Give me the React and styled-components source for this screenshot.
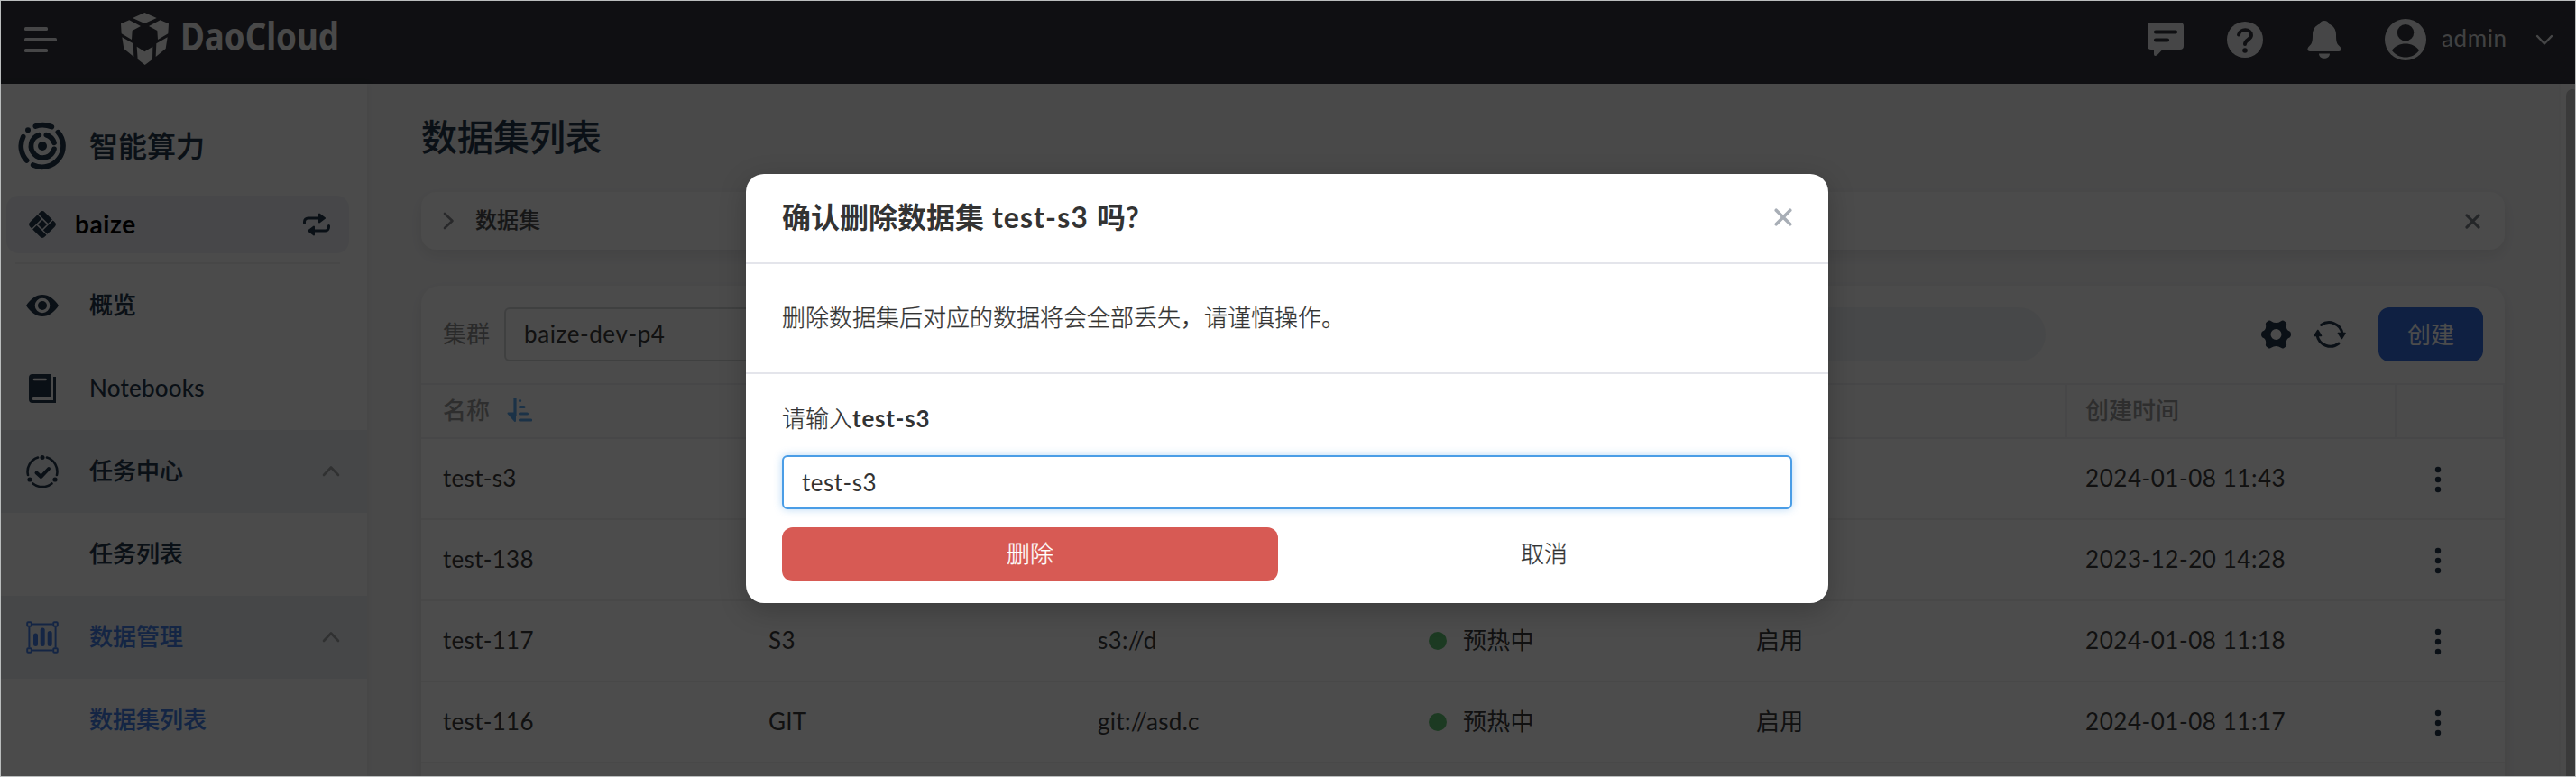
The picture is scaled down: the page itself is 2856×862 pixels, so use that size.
import React from "react";
import styled, { createGlobalStyle, css } from "styled-components";

const ink = "#24364a";
const text = "#3a3a3a";
const blue = "#437ee4";
const line = "#eeeff1";

const GlobalStyle = createGlobalStyle`
  *, *::before, *::after { box-sizing: border-box; }
  body { margin: 0; font-family: Lato, "Noto Sans CJK SC", sans-serif; font-size: 26px; color: ${text}; }
  button, input { font: inherit; color: inherit; margin: 0; }
`;

const medium = css`
  -webkit-text-stroke: 0.2px currentColor;
`;
const light = css`
  font-weight: 300;
  -webkit-text-stroke: 0.25px currentColor;
`;

const Frame = styled.div`
  position: relative;
  display: flex;
  flex-direction: column;
  width: 2856px;
  height: 862px;
  border: 1px solid #babdbd;
  overflow: hidden;
  background: #f5f6f7;
`;

const Header = styled.header`
  display: flex;
  align-items: center;
  flex: none;
  height: 92px;
  padding: 0 24px 7px 26px;
  background: #32353c;
  color: #ebecee;
`;
const Brand = styled.div`
  display: flex;
  align-items: center;
  gap: 12px;
  margin-left: 70px;
  padding-bottom: 1px;
`;
const WordmarkSvg = styled.svg`
  margin: 0 0 4px 2px;
  overflow: visible;
`;
const HeaderTools = styled.div`
  display: flex;
  align-items: center;
  margin-left: auto;
`;
const HeaderIcon = styled.span`
  display: flex;
  justify-content: center;
  width: 40px;
  margin-right: 48px;
`;
const User = styled.div`
  display: flex;
  align-items: center;
  margin-left: -1px;
  line-height: 40px;
  letter-spacing: 0.6px;
`;
const UserName = styled.span`
  width: 104px;
  margin-left: 17px;
  padding-bottom: 3px;
  color: #d9dbde;
`;

const Body = styled.div`
  display: flex;
  flex: 1;
  min-height: 0;
`;

const Sidebar = styled.aside`
  position: relative;
  flex: none;
  width: 406px;
  background: #fafafa;
  box-shadow: 2px 0 8px rgba(0, 0, 0, 0.05);
  color: ${ink};
`;
const SidebarTitle = styled.div`
  ${medium}
  display: flex;
  align-items: center;
  gap: 25px;
  height: 124px;
  padding: 14px 0 0 19px;
  font-size: 32px;
  font-weight: 500;
  line-height: 40px;
`;
const Workspace = styled.div`
  display: flex;
  align-items: center;
  height: 64px;
  margin: 0 20px 10px 6px;
  padding: 0 20px 0 24px;
  border-radius: 14px;
  background: #edeff3;
`;
const WorkspaceName = styled.span`
  flex: 1;
  margin-left: 20px;
  padding-bottom: 2px;
  font-size: 28px;
  font-weight: 700;
  line-height: 40px;
  letter-spacing: 0.6px;
  color: #000;
`;
const Divider = styled.hr`
  height: 2px;
  margin: 0 30px 0 16px;
  border: 0;
  background: #efefef;
`;
const NavItem = styled.a`
  display: flex;
  align-items: center;
  height: 92px;
  padding: 0 30px 0 28px;
  font-weight: 500;
  line-height: 40px;
  letter-spacing: ${(p) => (p.$latin ? "0.2px" : "0")};
  color: ${(p) => (p.$active ? blue : ink)};
  background: ${(p) => (p.$open ? "#ebeef2" : "transparent")};
`;
const NavIcon = styled.span`
  display: flex;
  width: 36px;
  height: 36px;
  margin-right: 34px;
`;
const NavLabel = styled.span`
  ${(p) => !p.$latin && medium}
  flex: 1;
  padding-bottom: 3px;
`;

const Main = styled.main`
  flex: 1;
  min-width: 0;
  padding: 0 60px 0 60px;
  background: #f5f5f6;
`;
const PageTitle = styled.h1`
  ${medium}
  height: 120px;
  margin: 0;
  padding-top: 29px;
  font-size: 40px;
  font-weight: 500;
  line-height: 60px;
  color: ${ink};
`;
const card = css`
  background: #fafafa;
  box-shadow: 0 6px 18px rgba(0, 0, 0, 0.09);
`;
const TipCard = styled.section`
  ${card}
  display: flex;
  align-items: center;
  height: 64px;
  margin-bottom: 40px;
  padding: 0 27px 0 20px;
  border-radius: 16px;
`;
const TipTitle = styled.span`
  ${medium}
  flex: 1;
  margin-left: 20px;
  padding-bottom: 3px;
  font-size: 24px;
  font-weight: 500;
  line-height: 36px;
  color: #4c4c4c;
`;
const TableCard = styled.section`
  ${card}
  height: 640px;
  border-radius: 20px 20px 0 0;
`;
const Toolbar = styled.div`
  display: flex;
  align-items: center;
  height: 108px;
  padding: 0 24px;
  color: ${ink};
`;
const FilterLabel = styled.span`
  width: 68px;
  padding-bottom: 2px;
  line-height: 40px;
  color: #8c8c8c;
`;
const Select = styled.div`
  width: 290px;
  height: 60px;
  padding-left: 20px;
  border: 2px solid #d4d5d8;
  border-radius: 6px;
  line-height: 55px;
  letter-spacing: 0.6px;
  color: ${text};
`;
const Search = styled.div`
  flex: 1;
  height: 60px;
  margin: 0 239px 0 40px;
  border-radius: 30px;
  background: #eff1f4;
`;
const CreateButton = styled.button`
  width: 116px;
  height: 60px;
  margin-left: 36px;
  padding: 0 0 4px;
  border: 0;
  border-radius: 12px;
  background: #336bdc;
  color: #fff;
`;
const RefreshSlot = styled.span`
  display: flex;
  margin-left: 25px;
`;

const columns = "363px 365px 366px 364px 367px 365px 120px";
const TableHead = styled.div`
  display: grid;
  grid-template-columns: ${columns};
  height: 62px;
  border-top: 2px solid ${line};
  border-bottom: 2px solid ${line};
  font-weight: 500;
  color: #9c9c9c;
`;
const HeadCell = styled.div`
  display: flex;
  align-items: center;
  gap: 19px;
  padding: 0 0 5px 20px;
  border-right: 2px solid ${line};
  &:first-child { padding-left: 24px; }
  svg { position: relative; top: 1px; }
`;
const Row = styled.div`
  display: grid;
  grid-template-columns: ${columns};
  align-items: center;
  height: 90px;
  border-bottom: 2px solid #f0f0f0;
  background: #fefefe;
`;
const Cell = styled.div`
  display: flex;
  align-items: center;
  padding-left: ${(p) => (p.$menu ? "42px" : p.$date ? "20px" : "22px")};
  padding-top: ${(p) => (p.$menu ? "2px" : "0")};
  padding-bottom: ${(p) => (p.$menu ? "0" : "3px")};
  line-height: 40px;
  letter-spacing: ${(p) => (p.$date ? "0.55px" : "0.3px")};
  &:first-child { padding-left: 24px; }
`;
const StatusDot = styled.i`
  width: 20px;
  height: 20px;
  margin: 2px 18px 0 1px;
  border-radius: 50%;
  background: #60c472;
`;

const ScrollTrack = styled.div`
  flex: none;
  width: 18px;
  padding: 6px 0 0 6px;
  border-left: 2px solid #f0f0f0;
  background: #f9f9f9;
`;
const ScrollThumb = styled.div`
  width: 14px;
  height: 100%;
  border-radius: 8px 8px 0 0;
  background: #c1c1c1;
`;

const Overlay = styled.div`
  position: absolute;
  inset: 0;
  display: flex;
  align-items: center;
  justify-content: center;
  padding-right: 2px;
  background: rgba(0, 0, 0, 0.7);
`;
const Dialog = styled.div`
  width: 1200px;
  height: 476px;
  border-radius: 20px;
  background: #fff;
  box-shadow: 0 8px 30px rgba(0, 0, 0, 0.22);
  color: #333;
`;
const DialogHead = styled.div`
  display: flex;
  align-items: center;
  justify-content: space-between;
  height: 100px;
  padding: 0 40px 2px 40px;
  border-bottom: 2px solid #e4e5eb;
`;
const DialogTitle = styled.h2`
  margin: 0;
  font-size: 32px;
  font-weight: 700;
  line-height: 48px;
`;
const TitleName = styled.span`
  letter-spacing: 1.1px;
`;
const DialogNote = styled.p`
  ${light}
  height: 122px;
  margin: 0;
  padding: 40px 40px 0;
  border-bottom: 2px solid #e4e5eb;
  line-height: 38px;
`;
const DialogForm = styled.div`
  display: flex;
  flex-direction: column;
  padding: 28px 40px 24px;
`;
const Prompt = styled.label`
  ${light}
  height: 62px;
  line-height: 42px;
`;
const PromptName = styled.b`
  font-weight: 700;
  letter-spacing: 0.8px;
  -webkit-text-stroke: 0;
`;
const Input = styled.input`
  height: 60px;
  margin-bottom: 20px;
  padding: 0 20px;
  border: 2px solid #4a9de6;
  border-radius: 6px;
  outline: none;
  background: #fff;
  letter-spacing: 0.5px;
  box-shadow: 0 0 10px rgba(74, 157, 230, 0.4);
`;
const Actions = styled.div`
  display: grid;
  grid-template-columns: 1fr 1fr;
  gap: 20px;
`;
const ActionButton = styled.button`
  ${light}
  height: 60px;
  padding: 0 0 5px;
  border: 0;
  border-radius: 12px;
  background: ${(p) => (p.$danger ? "#d75a54" : "transparent")};
  color: ${(p) => (p.$danger ? "#fff" : "#333")};
`;

const MenuIcon = () => (
  <svg width="36" height="28" viewBox="0 0 36 28" fill="currentColor">
    <rect width="26" height="4" rx="1.5" />
    <rect y="12" width="36" height="4" rx="1.5" />
    <rect y="24" width="26" height="4" rx="1.5" />
  </svg>
);
const Logo = () => (
  <svg width="55" height="60" viewBox="399 37 165 180" fill="#f4f4f4">
    <path d="M481 40l40 18-40 18-40-18zM402 77l28-12 38 20-28 15-2 30-34-20zM561 77l-28-12-38 20 28 15 2 30 34-20zM406 122l37 21 2 44-33-27zM557 122l-37 21-2 44 33-27zM455 153l26 17 27-17-1 42-25 19-24-19z" />
  </svg>
);
const Wordmark = () => (
  <WordmarkSvg width="176" height="44" viewBox="0 0 176 44">
    <text x="-2" y="37" textLength="176" lengthAdjust="spacingAndGlyphs" fontFamily='"Noto Sans", sans-serif' fontWeight="700" fontSize="43" fill="#f4f4f4">DaoCloud</text>
  </WordmarkSvg>
);
const MessageIcon = () => (
  <svg width="40" height="38" viewBox="0 0 40 38">
    <path d="M4 0h32a4 4 0 0 1 4 4v22a4 4 0 0 1-4 4H16.500l-6 6.200Q7 38 7 35V30H4a4 4 0 0 1-4-4V4a4 4 0 0 1 4-4z" fill="currentColor" />
    <path d="M9 10.500h22M9 19.500h13" stroke="#32353c" strokeWidth="4.200" strokeLinecap="round" />
  </svg>
);
const HelpIcon = () => (
  <svg width="40" height="40" viewBox="0 0 40 40" fill="none">
    <circle cx="20" cy="20" r="20" fill="currentColor" />
    <path d="M13 14.500c1-7 14-7 14 .5 0 5-7 5-7 10" stroke="#32353c" strokeWidth="4" strokeLinecap="round" />
    <circle cx="20" cy="32" r="2.800" fill="#32353c" />
  </svg>
);
const BellIcon = () => (
  <svg width="38" height="42" viewBox="0 0 38 42" fill="currentColor">
    <path d="M19 0c3 0 4.500 1.500 5 3.500 5 2 8 6 8 12 0 7 .5 10 4 13 2.500 2.500 2 5.500-1 5.500H3c-3 0-3.500-3-1-5.500 3.500-3 4-6 4-13 0-6 3-10 8-12C14.500 1.500 16 0 19 0zM13 36.500h12c0 7-12 7-12 0z" />
  </svg>
);
const UserIcon = () => (
  <svg width="46" height="46" viewBox="0 0 46 46">
    <circle cx="23" cy="23" r="23" fill="currentColor" />
    <circle cx="23" cy="15.300" r="9.200" fill="#32353c" />
    <path d="M8 35c6-10 24-10 30 0-7 10-23 10-30 0z" fill="#32353c" />
  </svg>
);
const Chevron = ({ dir = "up", color = "#a0a3a6", width = 2.6 }) => {
  const d = { up: "M2 14l8-8.500 8 8.500", down: "M2 6l8 8.500L18 6", right: "M6 2l8.500 8L6 18" }[dir];
  return (
    <svg width="20" height="20" viewBox="0 0 20 20" fill="none" stroke={color} strokeWidth={width} strokeLinecap="round" strokeLinejoin="round">
      <path d={d} />
    </svg>
  );
};
const CloseIcon = ({ size = 18, color }) => (
  <svg width={size} height={size} viewBox="0 0 18 18" stroke={color} strokeWidth="3.200" strokeLinecap="round">
    <path d="M2 2l14 14M16 2L2 16" />
  </svg>
);
const ComputeIcon = () => (
  <svg width="54" height="54" viewBox="60 406 162 162" fill="none" stroke={ink} strokeWidth="17" strokeLinecap="round">
    <path d="M118 421Q144 412 172 423M193 441A70 70 0 0 1 110 550M77 456A70 70 0 0 0 89 535" />
    <path d="M154 450A39 39 0 0 1 180 476M130 450A39 39 0 1 0 180 497" />
    <circle cx="141" cy="487" r="15" fill={ink} stroke="none" />
    <circle cx="93" cy="434" r="9" fill={ink} stroke="none" />
  </svg>
);
const WorkspaceIcon = () => (
  <svg width="32" height="32" viewBox="-50 -50 100 100" fill={ink}>
    <g transform="rotate(-45)">
      <path d="M-36-24a12 12 0 0 1 12-12H12v20H-36zM16-36h8a12 12 0 0 1 12 12V12H16zM-12 16H36v8a12 12 0 0 1-12 12H-12zM-36-12h20V36h-8a12 12 0 0 1-12-12z" />
      <rect x="-11" y="-11" width="22" height="22" />
    </g>
  </svg>
);
const SwitchIcon = () => (
  <svg width="32" height="28" viewBox="0 0 32 28" fill="none" stroke={ink} strokeWidth="3" strokeLinecap="round">
    <path d="M2.500 12.500V11a4 4 0 0 1 4-4H20M29.500 15.500V17a4 4 0 0 1-4 4H12" />
    <path d="M19 2.500v9l6-4.500zM13 16.500v9L7 21z" fill={ink} strokeWidth="2" strokeLinejoin="round" />
  </svg>
);
const EyeIcon = () => (
  <svg width="36" height="36" viewBox="0 0 36 36" fill={ink} fillRule="evenodd">
    <path d="M0 18C5 10.500 11 6 18 6s13 4.500 18 12c-5 7.500-11 12-18 12S5 25.500 0 18zM18 9.700a8.300 8.300 0 1 0 0 16.600 8.300 8.300 0 0 0 0-16.600z" />
    <circle cx="18" cy="18" r="5" />
  </svg>
);
const BookIcon = () => (
  <svg width="36" height="36" viewBox="0 0 36 36">
    <path d="M7 2h20v25H8c-2 0-2 4 0 4h22V5h3v29H7a4 4 0 0 1-4-4V6a4 4 0 0 1 4-4z" fill={ink} />
    <path d="M9 8h12.500" stroke="#fafafa" strokeWidth="2.600" strokeLinecap="round" />
  </svg>
);
const TaskIcon = () => (
  <svg width="36" height="36" viewBox="0 0 36 36" fill="none" stroke={ink} strokeWidth="2.600" strokeLinecap="round">
    <path d="M13 2.500A16.500 16.500 0 0 0 2 22M23 2.500A16.500 16.500 0 0 1 34 22M7.500 31.500A17 17 0 0 0 28.500 31.500" />
    <path d="M11.500 19.500l5 4.500 8.500-9" strokeWidth="4" strokeLinejoin="round" />
    <g fill={ink} stroke="none">
      <circle cx="18" cy="2.500" r="2.500" />
      <circle cx="4" cy="27" r="2.600" />
      <circle cx="32" cy="27" r="2.600" />
    </g>
  </svg>
);
const DataIcon = () => (
  <svg width="36" height="36" viewBox="0 0 36 36" fill="none" stroke={blue} strokeWidth="2">
    <path d="M6.500 3.400h23M6.500 32.600h23M3.400 6.500v23M32.600 6.500v23" />
    <rect x="1.200" y="1.200" width="4.600" height="4.600" rx="1" />
    <rect x="30.200" y="1.200" width="4.600" height="4.600" rx="1" />
    <rect x="1.200" y="30.200" width="4.600" height="4.600" rx="1" />
    <rect x="30.200" y="30.200" width="4.600" height="4.600" rx="1" />
    <path d="M10.500 16v9.500M18.200 10v15.500M26.200 13.500v12" strokeWidth="5" strokeLinecap="round" />
  </svg>
);
const SortIcon = () => (
  <svg width="28" height="28" viewBox="0 0 28 28" fill="none" stroke="#5aa8ee" strokeWidth="3.200" strokeLinecap="round">
    <path d="M9 1.500v18" />
    <path d="M1.500 17.500h7.500v8.500z" fill="#5aa8ee" strokeWidth="2" strokeLinejoin="round" />
    <path d="M14.500 3.500h.1M14.500 10.500h4.500M14.500 18h8M14.500 25h12" />
  </svg>
);
const GearIcon = () => (
  <svg width="33" height="32" viewBox="0 0 33 32" fill={ink} fillRule="evenodd">
    <path d="M8 .8Q9.500-.2 11 1.200Q16.500 5 22 1.200Q23.500-.2 25 .8L27 2.200Q28.500 3.300 28 5Q27 11 31.500 12.500Q33 13 33 16Q33 19 31.500 19.500Q27 21 28 27Q28.500 28.700 27 29.800L25 31.200Q23.500 32.200 22 30.800Q16.500 27 11 30.800Q9.500 32.200 8 31.200L6 29.800Q4.500 28.700 5 27Q6 21 1.500 19.500Q0 19 0 16Q0 13 1.500 12.500Q6 11 5 5Q4.500 3.300 6 2.200zM16.500 10a6 6 0 1 0 0 12 6 6 0 0 0 0-12z" />
  </svg>
);
const RefreshIcon = () => (
  <svg width="36" height="36" viewBox="0 0 36 36" fill="none" stroke={ink} strokeWidth="3" strokeLinecap="round">
    <path d="M8.500 7.500A15 15 0 0 1 32 17M28 28A15 15 0 0 1 4 19" />
    <path d="M27.500 16.500h7.500l-3.700 6zM1 19.500h7.500l-3.700-6z" fill={ink} strokeWidth="1.600" strokeLinejoin="round" />
  </svg>
);
const KebabIcon = () => (
  <svg width="8" height="30" viewBox="0 0 8 30" fill={ink}>
    <circle cx="4" cy="4" r="3.200" />
    <circle cx="4" cy="15" r="3.200" />
    <circle cx="4" cy="26" r="3.200" />
  </svg>
);

const nav = [
  { label: "概览", icon: <EyeIcon /> },
  { label: "Notebooks", icon: <BookIcon />, latin: true },
  { label: "任务中心", icon: <TaskIcon />, open: true },
  { label: "任务列表" },
  { label: "数据管理", icon: <DataIcon />, open: true, active: true },
  { label: "数据集列表", active: true },
];

const rows = [
  { name: "test-s3", created: "2024-01-08 11:43" },
  { name: "test-138", created: "2023-12-20 14:28" },
  { name: "test-117", type: "S3", uri: "s3://d", status: "预热中", sharing: "启用", created: "2024-01-08 11:18" },
  { name: "test-116", type: "GIT", uri: "git://asd.c", status: "预热中", sharing: "启用", created: "2024-01-08 11:17" },
];

export default function App() {
  return (
    <>
      <GlobalStyle />
      <Frame>
        <Header>
          <MenuIcon />
          <Brand>
            <Logo />
            <Wordmark />
          </Brand>
          <HeaderTools>
            <HeaderIcon><MessageIcon /></HeaderIcon>
            <HeaderIcon><HelpIcon /></HeaderIcon>
            <HeaderIcon><BellIcon /></HeaderIcon>
            <User>
              <UserIcon />
              <UserName>admin</UserName>
              <Chevron dir="down" color="#ebecee" width={2.4} />
            </User>
          </HeaderTools>
        </Header>
        <Body>
          <Sidebar>
            <SidebarTitle>
              <ComputeIcon />
              智能算力
            </SidebarTitle>
            <Workspace>
              <WorkspaceIcon />
              <WorkspaceName>baize</WorkspaceName>
              <SwitchIcon />
            </Workspace>
            <Divider />
            {nav.map((item) => (
              <NavItem key={item.label} $open={item.open} $active={item.active} $latin={item.latin}>
                <NavIcon>{item.icon}</NavIcon>
                <NavLabel $latin={item.latin}>{item.label}</NavLabel>
                {item.open && <Chevron />}
              </NavItem>
            ))}
          </Sidebar>
          <Main>
            <PageTitle>数据集列表</PageTitle>
            <TipCard>
              <Chevron dir="right" color="#85888c" />
              <TipTitle>数据集</TipTitle>
              <CloseIcon size={17} color="#7a7f88" />
            </TipCard>
            <TableCard>
              <Toolbar>
                <FilterLabel>集群</FilterLabel>
                <Select>baize-dev-p4</Select>
                <Search />
                <GearIcon />
                <RefreshSlot><RefreshIcon /></RefreshSlot>
                <CreateButton>创建</CreateButton>
              </Toolbar>
              <TableHead>
                <HeadCell>名称<SortIcon /></HeadCell>
                <HeadCell />
                <HeadCell />
                <HeadCell />
                <HeadCell />
                <HeadCell>创建时间</HeadCell>
                <HeadCell />
              </TableHead>
              {rows.map((row) => (
                <Row key={row.name}>
                  <Cell>{row.name}</Cell>
                  <Cell>{row.type}</Cell>
                  <Cell>{row.uri}</Cell>
                  <Cell>{row.status && <StatusDot />}{row.status}</Cell>
                  <Cell>{row.sharing}</Cell>
                  <Cell $date>{row.created}</Cell>
                  <Cell $menu><KebabIcon /></Cell>
                </Row>
              ))}
            </TableCard>
          </Main>
          <ScrollTrack><ScrollThumb /></ScrollTrack>
        </Body>
        <Overlay>
          <Dialog role="dialog">
            <DialogHead>
              <DialogTitle>确认删除数据集<TitleName> test-s3 </TitleName>吗?</DialogTitle>
              <CloseIcon size={20} color="#a8aeb6" />
            </DialogHead>
            <DialogNote>删除数据集后对应的数据将会全部丢失，请谨慎操作。</DialogNote>
            <DialogForm>
              <Prompt>请输入<PromptName>test-s3</PromptName></Prompt>
              <Input defaultValue="test-s3" />
              <Actions>
                <ActionButton $danger>删除</ActionButton>
                <ActionButton>取消</ActionButton>
              </Actions>
            </DialogForm>
          </Dialog>
        </Overlay>
      </Frame>
    </>
  );
}
